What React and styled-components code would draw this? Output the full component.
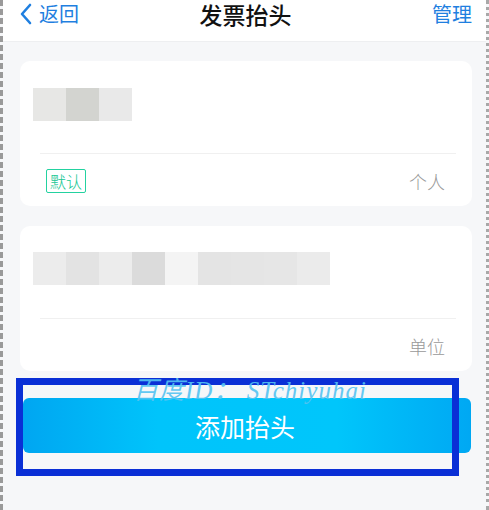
import React from 'react';
import styled, { createGlobalStyle } from 'styled-components';

const GlobalStyle = createGlobalStyle`
  html, body {
    margin: 0;
    padding: 0;
    background: #f6f7f9;
    font-family: "Noto Sans CJK SC", "Noto Sans", sans-serif;
  }
`;

const Frame = styled.div`
  position: relative;
  box-sizing: border-box;
  width: 489px;
  height: 510px;
  background: #f6f7f9;
  border-left: 3px dashed #9a9a9a;
  border-right: 3px dotted #a8a8a8;
  overflow: hidden;
`;

const NavBar = styled.div`
  height: 42px;
  background: #fff;
  border-bottom: 1px solid #eeeff1;
  display: grid;
  grid-template-columns: 1fr auto 1fr;
  align-items: start;
  padding: 0 14px 0 16px;
  box-sizing: border-box;
`;

const NavLink = styled.div`
  display: flex;
  align-items: center;
  gap: 6px;
  color: #1f7fe0;
  font-size: 20px;
  line-height: 28px;
  justify-self: ${p => (p.$end ? 'end' : 'start')};
`;

const Title = styled.div`
  font-size: 23px;
  line-height: 29px;
  color: #111;
  font-weight: 500;
`;

const Content = styled.div`
  padding: 19px 14px 0 17px;
  display: flex;
  flex-direction: column;
  gap: 20px;
`;

const Card = styled.div`
  background: #fff;
  border-radius: 10px;
  height: 145px;
  box-sizing: border-box;
  padding: ${p => p.$top}px 16px 0 13px;
  display: flex;
  flex-direction: column;
`;

const Blur = styled.div`
  display: flex;
  height: 33px;
`;

const Pixel = styled.div`
  width: 33px;
  height: 33px;
  background: ${p => p.$c};
`;

const Divider = styled.div`
  height: 1px;
  background: #f0f0f0;
  margin: ${p => p.$mt}px 0 0 7px;
`;

const Footer = styled.div`
  display: flex;
  align-items: center;
  justify-content: space-between;
  padding: 15px 11px 0 13px;
  height: 24px;
`;

const Badge = styled.span`
  border: 1px solid #23d2a0;
  border-radius: 2px;
  color: #17c793;
  font-size: 16px;
  line-height: 22px;
  padding: 0 3px;
  font-weight: 300;
`;

const Kind = styled.span`
  margin-left: auto;
  color: #999;
  font-size: 18px;
  line-height: 24px;
  font-weight: 300;
`;

const AddButton = styled.div`
  margin: 27px 15px 0 20px;
  height: 55px;
  border-radius: 6px;
  background: linear-gradient(90deg, #00a6f1 0%, #00c4fb 30%, #00c6fb 70%, #00a8f3 100%);
  color: #fff;
  font-size: 25px;
  display: flex;
  align-items: center;
  justify-content: center;
  padding-right: 4px;
`;

const Marker = styled.div`
  position: absolute;
  left: 13px;
  top: 378px;
  width: 443px;
  height: 98px;
  box-sizing: border-box;
  border: 7px solid #0a2fd6;
`;

const Watermark = styled.div`
  position: absolute;
  left: 130px;
  top: 370px;
  color: #55c3f2;
  font-family: "Liberation Serif", "Noto Sans CJK SC", serif;
  font-style: italic;
  font-size: 25px;
  letter-spacing: 1px;
  white-space: nowrap;
  opacity: 0.9;
`;

const card1 = ['#e7e7e5', '#d3d4d0', '#e9e9e9'];
const card2 = ['#ececec', '#e3e3e3', '#ececec', '#dbdbdb', '#f4f4f4', '#e4e4e4', '#e5e5e5', '#e6e6e6', '#ebebeb'];

export default function App() {
  return (
    <Frame>
      <GlobalStyle />
      <NavBar>
        <NavLink>
          <svg width="14" height="22" viewBox="0 0 14 22">
            <polyline points="11,2 3,11 11,20" fill="none" stroke="#1f7fe0" strokeWidth="2.6" strokeLinecap="round" strokeLinejoin="round" />
          </svg>
          返回
        </NavLink>
        <Title>发票抬头</Title>
        <NavLink $end>管理</NavLink>
      </NavBar>
      <Content>
        <Card $top={27}>
          <Blur>
            {card1.map((c, i) => <Pixel key={i} $c={c} />)}
          </Blur>
          <Divider $mt={32} />
          <Footer>
            <Badge>默认</Badge>
            <Kind>个人</Kind>
          </Footer>
        </Card>
        <Card $top={26}>
          <Blur>
            {card2.map((c, i) => <Pixel key={i} $c={c} />)}
          </Blur>
          <Divider $mt={33} />
          <Footer>
            <Kind>单位</Kind>
          </Footer>
        </Card>
      </Content>
      <AddButton>添加抬头</AddButton>
      <Marker />
      <Watermark>百度ID： STchiyuhai</Watermark>
    </Frame>
  );
}
